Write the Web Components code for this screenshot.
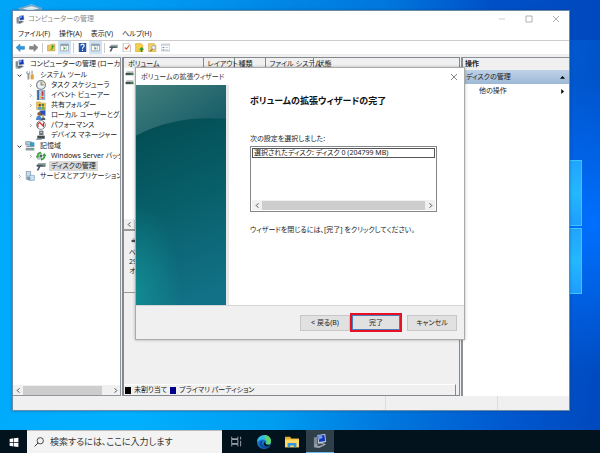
<!DOCTYPE html>
<html lang="ja">
<head>
<meta charset="utf-8">
<title>コンピューターの管理</title>
<style>
html,body{margin:0;height:100%}
body{font:7px/10px "Noto Sans","Noto Sans CJK JP",sans-serif;font-feature-settings:"palt";color:#222;overflow:hidden}
</style>
</head>
<body>
<desk-top>
  <mmc-window></mmc-window>
  <wizard-dialog></wizard-dialog>
  <task-bar slot="bar"></task-bar>
</desk-top>
<script>
const ICONS={
computer:'<path d="M5 1l9-1 1 9-9 2z" fill="#c8ced6"/><path d="M6 2l7-1 1 7-7 1z" fill="#1238b8"/><path d="M6 2l4-.6 1 3-4 2z" fill="#6f9cf2"/><path d="M1 4l4-1v10l-4 1z" fill="#7f8a96"/><path d="M2 12l9-2 4 2-8 4-6-1z" fill="#9ca5ae"/><path d="M4 12l6-1 2 1-6 2z" fill="#3c4650"/>',
back:'<path d="M0 8l7-6v4h8v5H7v4z" fill="#2d9bdc" stroke="#1b76b5"/>',
fwd:'<path d="M16 8L9 2v4H1v5h8v4z" fill="#888" stroke="#6d6d6d"/>',
up:'<path d="M1 4h5l1-2h7v12H1z" fill="#eac65a" stroke="#b99a3e"/><path d="M4 12c4 0 5-3 5-5l-2 1 3-5 3 4-2 0c0 4-3 6-7 5z" fill="#2f9a38"/>',
panes:'<path d="M1 2h14v12H1z" fill="#fff" stroke="#7b8791"/><path d="M1 2h14v3H1z" fill="#8b97a2"/><path d="M6 5v9M11 5v9" stroke="#8e99a3"/><path d="M7 7l3 2.500-3 2.500z" fill="#35a043"/>',
help:'<path d="M2 0h12v16H2z" fill="#2755b0" stroke="#183b82"/><path d="M5 5c0-4 6-4 6 0 0 2-3 2-3 5M8 12v2" stroke="#fff" stroke-width="2" fill="none"/>',
disk:'<path d="M3 4h12l-1 5H1z" fill="#b8bec3"/><path d="M1 7h14v4H1z" fill="#4a4f53"/><path d="M10 8h4v2h-4z" fill="#2fbd41"/>',
tool:'<path d="M4 3h12l-1 4H1z" fill="#9da6ab"/><path d="M1 6h14v3H7l-3 6H1l3-6H1z" fill="#4c5660"/><path d="M11 6h3v2h-3z" fill="#38ba42"/>',
check:'<path d="M2 0h9l4 4v12H2z" fill="#fff" stroke="#8a9299"/><path d="M5 8l3 3 5-7" stroke="#d9532b" stroke-width="2" fill="none"/>',
folderup:'<path d="M1 1h10l3 3v12H1z" fill="#f4ce4e" stroke="#d2a634"/><path d="M10 16v-4H7l5-5 4 5h-3v4z" fill="#24963a"/>',
folderfind:'<path d="M1 1h10l3 3v12H1z" fill="#f2cf67" stroke="#cfaa45"/><circle cx="10" cy="8" r="3.500" fill="#e7f3fb" stroke="#7a8890"/><path d="M8 11l-4 4" stroke="#8b6b3c" stroke-width="2"/>',
list:'<path d="M0 2h16v12H0z" fill="#fff" stroke="#87929a"/><path d="M0 2h16v3H0z" fill="#cdd5da"/><path d="M3 7h3v2H3zM3 11h3v2H3z" fill="#5d8fc2"/><path d="M8 8h5M8 12h5" stroke="#9aa"/>',
tools:'<path d="M4 1c-3 2-2 5 0 6v8h3V7c2-1 2-4 0-6v4H4z" fill="#8f989f"/><path d="M10 1h3v6h-3z" fill="#b9c0c5"/><path d="M9 7h5v8H9z" fill="#e2a336"/>',
clock:'<circle cx="8" cy="8" r="7" fill="#e8f0f5" stroke="#84888b" stroke-width="2"/><path d="M8 8V2a6 6 0 0 1 6 6z" fill="#e7d4a3"/><path d="M8 3v5h4" stroke="#444" fill="none"/>',
event:'<path d="M2 0h12v16H2z" fill="#b9cfe3" stroke="#527ca6"/><path d="M2 0h3v16H2z" fill="#3c6ca0"/><path d="M9 2h3v7H9zM9 11h3v3H9z" fill="#cf3930"/><path d="M6 8l3 5H5z" fill="#e5bd33"/>',
share:'<path d="M1 3h6l1 2h7v10H1z" fill="#efca58" stroke="#c69f37"/><circle cx="6" cy="8" r="2" fill="#764d34"/><circle cx="11" cy="8" r="2" fill="#4d7f3c"/><path d="M3 15c0-6 6-6 6 0z" fill="#5a94cd"/><path d="M9 15c0-6 5-6 5 0z" fill="#5aac5f"/>',
users:'<path d="M6 1l9-1v9H6z" fill="#2750b1" stroke="#9daab7"/><circle cx="5" cy="6" r="3" fill="#8c603e"/><path d="M0 16c0-9 9-9 9 0z" fill="#4a83c9"/><circle cx="11" cy="9" r="2" fill="#d4a880"/><path d="M8 16c0-6 7-6 7 0z" fill="#4d5966"/>',
perf:'<circle cx="8" cy="8" r="7" fill="#fff" stroke="#7d8286" stroke-width="1.500"/><path d="M3 12V6l3-2 6 6V4" stroke="#cc2b2b" stroke-width="2" fill="none"/>',
device:'<path d="M5 1h7v7H5z" fill="#69747d"/><path d="M7 3h3v2H7z" fill="#cbd2d6"/><path d="M2 9h12v5H2z" fill="#42494f"/><path d="M0 14h9v2H0z" fill="#9ba3a8"/>',
storage:'<path d="M1 1h9l1 5H1z" fill="#b7c8d2" stroke="#72858f"/><path d="M2 7h13v3H2zM1 11h14v4H1z" fill="#8e9da7"/><path d="M8 2h7v6H8z" fill="#3b9bc2"/><path d="M10 12h3v2h-3z" fill="#3cb54a"/>',
backup:'<path d="M2 3h8v11H2z" fill="#bcc6cd"/><path d="M1 8a7 7 0 0 1 7-7v3a4 4 0 0 0-4 4h2l-4 4-3-4z" fill="#4aac3c"/><path d="M15 8a7 7 0 0 1-7 7v-3a4 4 0 0 0 4-4h-2l3-5 4 5z" fill="#36a33a"/><circle cx="8" cy="8" r="2" fill="#45657b"/>',
service:'<path d="M2 0h7v13H2z" fill="#b5c9da" stroke="#718da8"/><path d="M3 3h5M3 6h5" stroke="#fff"/><path d="M7 7h8v8H7z" fill="#cfe1ee" stroke="#6f9abd"/><circle cx="6" cy="12" r="3" fill="#7d9db8"/>',
start:'<path d="M1 3l6-1v6H1zM8 2l7-1v7H8zM1 9h6v6l-6-1zM8 9h7v7l-7-1z" fill="#fff"/>',
search:'<circle cx="10" cy="6" r="5" fill="none" stroke="#333" stroke-width="1.400"/><path d="M6.500 9.500L1 15" stroke="#333" stroke-width="1.600"/>',
task:'<path d="M1 1v3h9V1M1 15v-3h9v3M1 5h9v6H1zM14 1v4M14 7v8" fill="none" stroke="#b8bec2" stroke-width="1.200"/>',
edge:'<circle cx="8" cy="8" r="8" fill="#1676cf"/><path d="M0 8C1-2 15-2 16 7c0 4-4 5-6 3 2-3 0-5-3-5C3 5 1 7 0 8z" fill="#35b9df"/><path d="M8 0c5 0 8 3 8 7 0 4-4 5-6 3 2-2 1-4-1-5 1-3 0-4-1-5z" fill="#5fd36b"/><path d="M7 6c-3 4 0 8 7 7-3 4-9 3-11-1-1-3 1-6 4-6z" fill="#0d4f9e"/><path d="M9.500 7.500c-1 2 1 4.500 5.500 3.500-1 1.500-2 2-4 2-3 0-5-3-1.500-5.500z" fill="#03131c"/>',
explorer:'<path d="M0 2h6l1 2h9v10H0z" fill="#e9ae2d"/><path d="M0 5h16v9H0z" fill="#ffd867"/><path d="M3 14V9h10v5h-3v-2H6v2z" fill="#3394df"/>',
bin:'<path d="M1 3l8-3 7 3-2 13H4z" fill="#b9dcf2" opacity=".6"/><path d="M1 3l7 2 8-2-7-2z" fill="#e5f3fb" stroke="#7ba8c6"/>',
min:'<path d="M2 8h12" stroke="currentColor"/>',
max:'<path d="M2 2h12v12H2z" fill="none" stroke="currentColor" stroke-width="1.500"/>',
close:'<path d="M2 2l12 12M14 2L2 14" stroke="currentColor" stroke-width="1.600"/>',
left:'<path d="M10 3L5 8l5 5" fill="none" stroke="currentColor" stroke-width="2"/>',
right:'<path d="M6 3l5 5-5 5" fill="none" stroke="currentColor" stroke-width="2"/>',
down:'<path d="M2 5l6 6 6-6" fill="none" stroke="currentColor" stroke-width="3"/>',
triup:'<path d="M0 12l8-9 8 9z"/>',
triright:'<path d="M4 0l9 8-9 8z"/>'
};
const BASE='*{box-sizing:border-box}button{font:inherit;font-feature-settings:inherit;color:inherit;background:none;border:0;padding:0;margin:0;white-space:nowrap}ul{list-style:none;margin:0;padding:0}';
function define(name,css,html){
  customElements.define(name,class extends HTMLElement{
    constructor(){
      super();
      const root=this.attachShadow({mode:'open'});
      root.innerHTML='<style>'+BASE+css+'</style>'+(typeof html==='function'?html(this):html);
    }
  });
}
define('ui-icon',':host{display:inline-flex;flex:none;width:var(--icon,9px);height:var(--icon,9px)}svg{width:100%;height:100%;display:block}',
  el=>`<svg viewBox="0 0 16 16" aria-hidden="true">${ICONS[el.getAttribute('name')]}</svg>`);

define('desk-top',`
:host{display:flex;flex-direction:column;height:100vh}
.area{position:relative;flex:1;overflow:hidden;background:
 radial-gradient(ellipse 90px 150px at 99% 52%,#0070ff,transparent),
 linear-gradient(100deg,#00a8fb 0,#00b0ff 30%,#009cf0 52%,#0078de 68%,#0058cf 86%,#0048bd 100%)}
.top{position:absolute;inset:0 0 auto 0;height:40px;background:linear-gradient(90deg,#00a5f8 0,#009bf2 25%,#0076dc 65%,#0050c8 82%,#0048bd)}
.bin{position:absolute;left:18px;top:4px;--icon:24px}
.pane{position:absolute;right:18px;width:30px;height:66px;top:160px;background:linear-gradient(#22a4ff,#24b8ff 50%,#1f9dff);border:1px solid #35c8ff}
.pane.low{top:228px}`,
`<div class="area"><div class="top"></div><ui-icon class="bin" name="bin"></ui-icon><div class="pane"></div><div class="pane low"></div><slot></slot></div><slot name="bar"></slot>`);

define('scroll-bar',`
:host{display:flex;align-items:center;height:10px;background:#f0f0f0;--icon:7px;color:#333}
button{width:10px;display:flex;justify-content:center}
.thumb{flex:1;height:9px;background:#cdcdcd;margin-right:var(--rest,0)}`,
`<button aria-label="左へ"><ui-icon name="left"></ui-icon></button><div class="thumb"></div><button aria-label="右へ"><ui-icon name="right"></ui-icon></button>`);

define('tree-item',`
:host{display:block;--indent:4px}
:host([level="1"]){--indent:0px}
button{display:flex;align-items:center;height:10px;gap:3px;padding-left:3px}
:host([level="1"]) button{padding-left:4px}
:host([level="2"]) button{padding-left:15px}
:host([level="0"]) button{padding-left:2px}
.arrow{display:flex;width:5px;--icon:5px;color:#777}
:host([state="open"]) .arrow{color:#222}
:host([level="0"]) .arrow{display:none}
.name{padding:0 2px}
:host([selected]) .name{background:#d9d9d9}
.pic{--icon:10px;display:flex}`,
el=>`<button><span class="arrow">${el.hasAttribute('state')?`<ui-icon name="${el.getAttribute('state')==='open'?'down':'right'}"></ui-icon>`:''}</span><ui-icon class="pic" name="${el.getAttribute('icon')}"></ui-icon><span class="name"><slot></slot></span></button>`);

define('console-tree',`
:host{display:flex;flex-direction:column;background:#fff;border:1px solid #8f959a;border-left:0;border-width:1px 1px 1px 0;overflow:hidden;min-width:0}
nav{flex:1;padding-top:1px}
.grp{margin-top:1px}`,
`<nav aria-label="コンソール ツリー">
<tree-item level="0" icon="computer">コンピューターの管理 (ローカル)</tree-item>
<tree-item class="grp" level="1" state="open" icon="tools">システム ツール</tree-item>
<tree-item level="2" state="closed" icon="clock">タスク スケジューラ</tree-item>
<tree-item level="2" state="closed" icon="event">イベント ビューアー</tree-item>
<tree-item level="2" state="closed" icon="share">共有フォルダー</tree-item>
<tree-item level="2" state="closed" icon="users">ローカル ユーザーとグループ</tree-item>
<tree-item level="2" state="closed" icon="perf">パフォーマンス</tree-item>
<tree-item level="2" icon="device">デバイス マネージャー</tree-item>
<tree-item class="grp" level="1" state="open" icon="storage">記憶域</tree-item>
<tree-item level="2" state="closed" icon="backup">Windows Server バックアップ</tree-item>
<tree-item level="2" icon="tool" selected>ディスクの管理</tree-item>
<tree-item level="1" state="closed" icon="service">サービスとアプリケーション</tree-item>
</nav><scroll-bar style="--rest:8px"></scroll-bar>`);

define('volume-view',`
:host{display:flex;flex-direction:column;background:#f0f0f0;border:1px solid #83898e;border-width:1px 1px 1px 2px;min-width:0;overflow:hidden}
.top{height:173px;background:#fff;display:flex;flex-direction:column;border-bottom:2px solid #9a9a9a;flex:none}
.list{flex:1}
table{border-collapse:collapse;width:100%;table-layout:fixed}
th{font-weight:400;text-align:left;height:10px;line-height:9px;padding:0 0 0 4px;background:#f0f0f0;border-right:1px solid #888;white-space:nowrap}
th:last-child{border-right:0}
td{height:10px;padding:0 0 0 1px}
td span{display:flex;gap:3px}
.disk{border-bottom:1px solid #999;height:62px;padding:5px;flex:none}
.disk p{margin:0;height:9px;line-height:9px}
.disk ui-icon{margin-left:2px}
.rest{flex:1}
.legend{display:flex;gap:3px;align-items:center;height:11px;border-top:1px solid #fff;border-right:1px solid #888;margin-right:3px;padding-left:1px}
i{width:6px;height:7px;background:#000}i.p{background:#00008b}`,
`<div class="top"><div class="list"><table>
<colgroup><col style="width:79px"><col style="width:31px"><col style="width:31px"><col style="width:48px"><col></colgroup>
<thead><tr><th>ボリューム</th><th>レイアウト</th><th>種類</th><th>ファイル システム</th><th>状態</th></tr></thead>
<tbody><tr><td><span><ui-icon name="disk"></ui-icon></span></td></tr><tr><td><span><ui-icon name="disk"></ui-icon>(</span></td></tr></tbody></table></div>
<scroll-bar></scroll-bar></div>
<div class="disk"><ui-icon name="disk"></ui-icon><p>ベー</p><p>299</p><p>オン</p></div>
<div class="rest"></div>
<div class="legend"><i></i><span>未割り当て</span><i class="p"></i><span>プライマリ パーティション</span></div>`);

define('action-pane',`
:host{display:flex;flex-direction:column;background:#fff;border-left:2px solid #8a9095;border-top:1px solid #8a9095;min-width:0}
h2{margin:0;font-size:7px;line-height:12px;height:12px;padding-left:2px;background:#f0f0f0}
button{display:flex;justify-content:space-between;align-items:center;height:14px;padding:0 4px 0 3px;--icon:5px}
.head{background:linear-gradient(#bfd2e8,#9db8d6)}
.more{padding-left:16px}`,
`<h2>操作</h2><button class="head">ディスクの管理<ui-icon name="triup"></ui-icon></button><button class="more">他の操作<ui-icon name="triright"></ui-icon></button>`);

define('mmc-window',`
:host{position:absolute;inset:10px 30px 19px 12px;display:flex;flex-direction:column;background:#f0f0f0;border:1px solid #6a8aa5;box-shadow:0 0 3px #0355}
header{display:flex;align-items:center;height:16px;background:#fff;padding-left:3px;gap:3px;color:#8a8a8a;flex:none}
header b{font-weight:400;flex:1}
.ctl{width:27px;display:flex;justify-content:center;--icon:8px;color:#999}
.menu{display:flex;height:14px;background:#fff;padding-left:5px;gap:9px;border-bottom:1px solid #ccc;flex:none}
.tools{display:flex;align-items:center;height:13px;background:#fff;padding-left:1px;flex:none;--icon:9px}
.tools button{width:13px;height:13px;display:flex;align-items:center;justify-content:center}
.tools .on{background:#cfe4f7}
.sep{width:1px;height:10px;background:#ccc;margin:0 2px}
main{flex:1;display:grid;grid-template-columns:108px minmax(0,1fr) 108px;gap:1px;margin-top:3px;min-height:0}
footer{height:14px;display:flex;flex:none}
footer i:first-child{flex:1}
footer i{border-right:1px solid #ddd;width:112px}footer i:last-child{width:71px;border:0}`,
`<header><ui-icon name="computer"></ui-icon><b>コンピューターの管理</b><div style="display:flex"><button class="ctl" aria-label="最小化"><ui-icon name="min"></ui-icon></button><button class="ctl" aria-label="最大化"><ui-icon name="max"></ui-icon></button><button class="ctl" aria-label="閉じる"><ui-icon name="close"></ui-icon></button></div></header>
<div class="menu"><button>ファイル(F)</button><button>操作(A)</button><button>表示(V)</button><button>ヘルプ(H)</button></div>
<div class="tools"><button aria-label="戻る"><ui-icon name="back"></ui-icon></button><button aria-label="進む"><ui-icon name="fwd"></ui-icon></button><span class="sep"></span><button aria-label="上へ"><ui-icon name="up"></ui-icon></button><button class="on" aria-label="ツリー"><ui-icon name="panes"></ui-icon></button><span class="sep"></span><button aria-label="ヘルプ"><ui-icon name="help"></ui-icon></button><button class="on" aria-label="操作ウィンドウ"><ui-icon name="panes"></ui-icon></button><span class="sep"></span><button aria-label="更新"><ui-icon name="tool"></ui-icon></button><button aria-label="プロパティ"><ui-icon name="check"></ui-icon></button><button aria-label="開く"><ui-icon name="folderup"></ui-icon></button><button aria-label="検索"><ui-icon name="folderfind"></ui-icon></button><button aria-label="一覧"><ui-icon name="list"></ui-icon></button></div>
<main><console-tree></console-tree><volume-view></volume-view><action-pane></action-pane></main>
<footer><i></i><i></i><i></i></footer>`);

define('wizard-dialog',`
:host{position:absolute;inset:67px 135px 90px 135px;display:flex;flex-direction:column;background:#fff;border:1px solid #aaa;box-shadow:0 0 3px #0004}
header{display:flex;height:17px;align-items:center;justify-content:space-between;padding:0 6px 0 5px;flex:none;--icon:8px;color:#333}
header button{display:flex;color:#666}
.body{flex:1;display:flex;min-height:0}
.art{width:93px;border-right:3px solid #e8e8e8;flex:none;display:flex}
.art svg{width:100%;height:100%}
.text{flex:1;padding:10px 27px 0 21px;min-width:0}
h1{font-size:9px;line-height:12px;margin:0 0 27px;color:#111;white-space:nowrap}
p{margin:0;white-space:nowrap}
.box{height:66px;border:1px solid #82878c;margin:2px 0 13px;padding:1px;display:flex;flex-direction:column}
.box li{border:1px solid #555;height:10px;line-height:8px;padding-left:1px;white-space:nowrap}
.box ul{flex:1}
footer{height:34px;background:#f0f0f0;border-top:1px solid #d5d5d5;display:flex;justify-content:flex-end;align-items:center;padding-right:7px;flex:none}
footer button{width:50px;height:16px;background:#e1e1e1;border:1px solid #c6c6c6}
footer .ok{width:52px;height:19px;border:2px solid #e81123;box-shadow:inset 0 0 0 1px #4a7ebb;margin-right:5px}`,
`<header><span>ボリュームの拡張ウィザード</span><button aria-label="閉じる"><ui-icon name="close"></ui-icon></button></header>
<div class="body"><div class="art"><svg viewBox="0 0 90 221" preserveAspectRatio="none" aria-hidden="true"><defs><linearGradient id="a" x2="1" y2="1"><stop stop-color="#42807e"/><stop offset="1" stop-color="#0b5260"/></linearGradient><linearGradient id="b" x1=".3" y1="0" x2=".5" y2="1"><stop stop-color="#034e54"/><stop offset=".5" stop-color="#08606b"/><stop offset="1" stop-color="#127187"/></linearGradient><radialGradient id="c" cx="0" cy=".95" r=".5"><stop stop-color="#139295" stop-opacity=".8"/><stop offset="1" stop-color="#139295" stop-opacity="0"/></radialGradient></defs><path fill="url(#a)" d="M0 0h90v60H0z"/><path fill="url(#b)" d="M0 51Q38 30 90 34v187H0z"/><path fill="url(#c)" d="M0 51Q38 30 90 34v187H0z"/></svg></div>
<div class="text"><h1>ボリュームの拡張ウィザードの完了</h1><p id="l">次の設定を選択しました:</p>
<div class="box"><ul role="listbox" aria-labelledby="l" tabindex="0"><li role="option">選択されたディスク: ディスク 0 (204799 MB)</li></ul><scroll-bar></scroll-bar></div>
<p>ウィザードを閉じるには、[完了] をクリックしてください。</p></div></div>
<footer><button>&lt; 戻る(B)</button><button class="ok">完了</button><button>キャンセル</button></footer>`);

define('task-bar',`
:host{display:flex;height:23px;background:#03131d;flex:none}
button{width:28px;display:flex;align-items:center;justify-content:center;--icon:14px}
.start{width:27px;--icon:10px}
label{width:195px;background:#f3f3f3;border-top:1px solid #bbb;display:flex;align-items:center;padding-left:7px;gap:6px;--icon:10px}
input{flex:1;min-width:0;border:0;background:none;padding:0;font:9px/14px "Noto Sans","Noto Sans CJK JP",sans-serif;font-feature-settings:inherit;color:#333;outline:0}
input::placeholder{color:#333;opacity:1}
.task{--icon:11px}
.on{background:#2f404b;border-bottom:1px solid #6cb8f0}`,
`<button class="start" aria-label="スタート"><ui-icon name="start"></ui-icon></button>
<label><ui-icon name="search"></ui-icon><input type="text" aria-label="検索" placeholder="検索するには、ここに入力します"></label>
<button class="task" aria-label="タスク ビュー"><ui-icon name="task"></ui-icon></button><button aria-label="Edge"><ui-icon name="edge"></ui-icon></button><button aria-label="エクスプローラー"><ui-icon name="explorer"></ui-icon></button><button class="on" aria-label="コンピューターの管理"><ui-icon name="computer"></ui-icon></button>`);
</script>
</body>
</html>
